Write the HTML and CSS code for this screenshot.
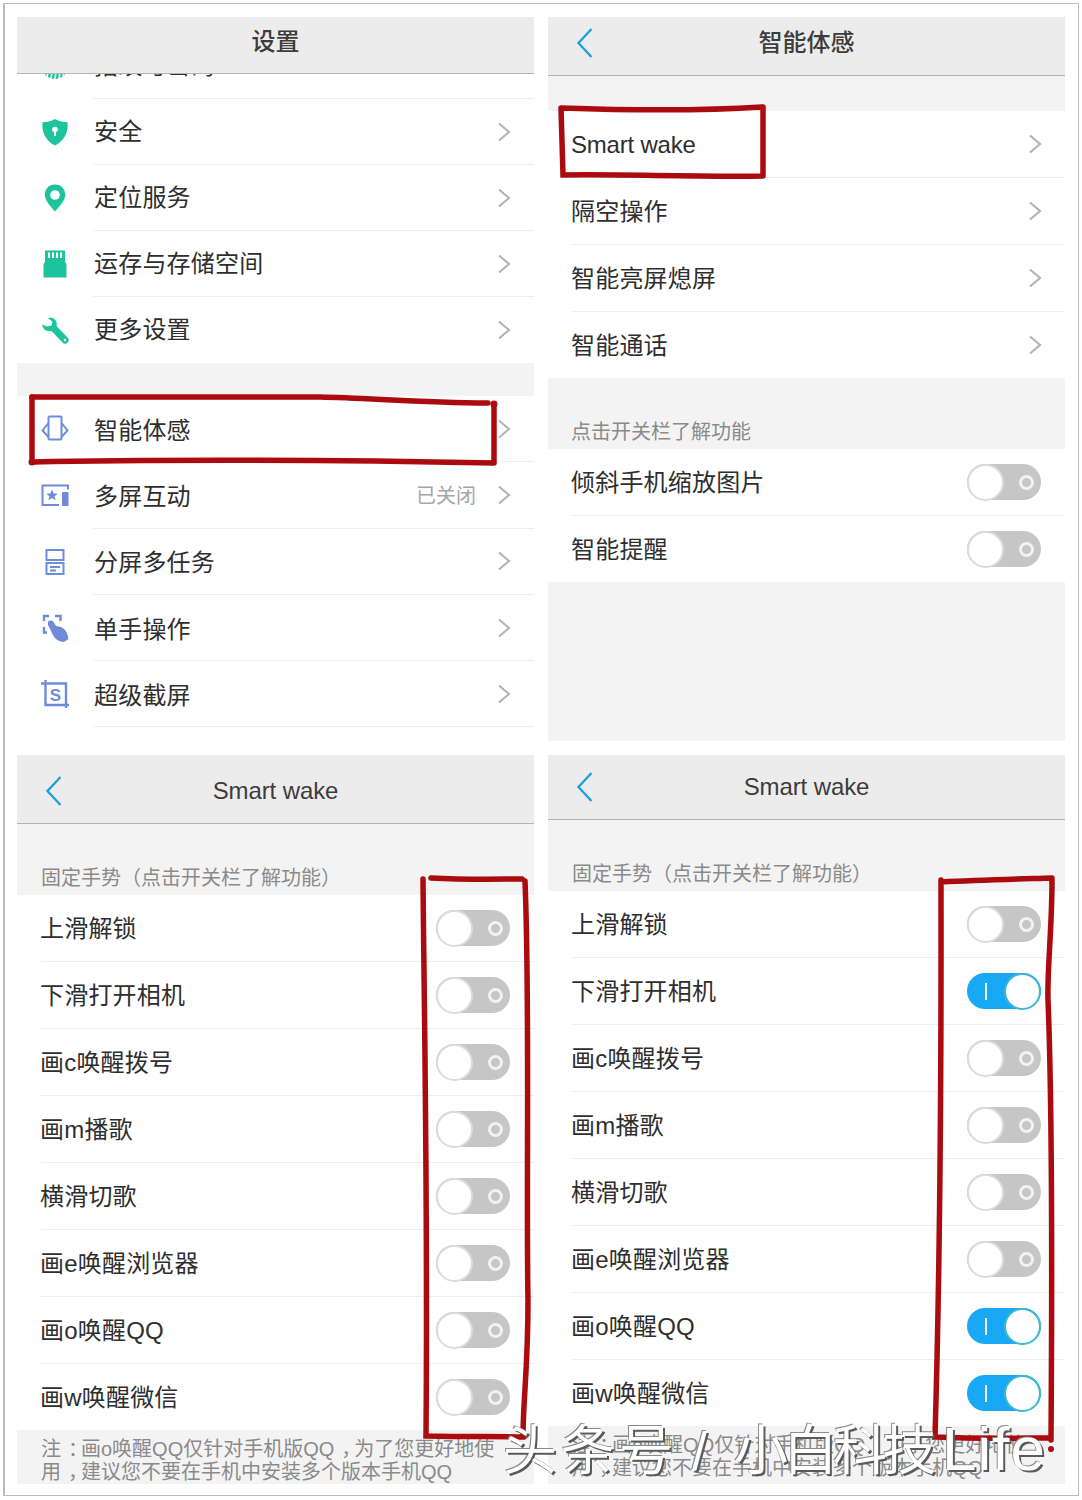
FILE: index.html
```html
<!DOCTYPE html>
<html lang="zh-CN">
<head>
    <meta charset="UTF-8">
    <meta name="viewport" content="width=device-width, initial-scale=1.0">
    <title>智能体感 Smart wake</title>
    <link rel="stylesheet" href="styles.css">
</head>
<body>
    <svg class="sprite" width="0" height="0">
        <symbol id="chev" viewBox="0 0 14 20"><path d="M2 1.5 L12 10 L2 18.5" fill="none" stroke="currentColor" stroke-width="2.2"/></symbol>
        <symbol id="back" viewBox="0 0 18 32"><path d="M15.5 2 L2.5 16 L15.5 30" fill="none" stroke="currentColor" stroke-width="2.4"/></symbol>
    </svg>

    <div class="sheet">
        <!-- 设置 -->
        <section class="panel">
            <header class="bar bar-a"><span></span><h2>设置</h2><span></span></header>
            <div class="row-cut">
                <div class="row">
                    <svg class="icon green" viewBox="0 0 28 28"><circle cx="14" cy="14" r="13" fill="currentColor"/><path d="M7 19 L6 26 M11 20 L10 27 M15 20 L14 27 M19 20 L18 27 M23 18 L22 25" stroke="#fff" stroke-width="1.6"/></svg>
                    <div class="row-body"><span class="name">指纹与密码</span></div>
                </div>
            </div>
            <div class="row">
                <svg class="icon green" viewBox="0 0 28 28"><path d="M14 1 C18 3.5 22 4.2 26.500 4.200 C27.500 13 24 22.500 14 27.500 C4 22.500 .5 13 1.500 4.200 C6 4.200 10 3.500 14 1Z" fill="currentColor"/><circle cx="14" cy="11.500" r="2.800" fill="#fff"/><rect x="13" y="12" width="2" height="6" fill="#fff"/></svg>
                <div class="row-body"><span class="name">安全</span><svg class="chev"><use href="#chev"/></svg></div>
            </div>
            <div class="row">
                <svg class="icon green" viewBox="0 0 28 28"><path d="M14 .5 C7.500 .5 3.800 5.500 3.800 10.500 C3.800 17 10 23 14 27.500 C18 23 24.200 17 24.200 10.500 C24.200 5.500 20.500 .5 14 .5Z" fill="currentColor"/><circle cx="14" cy="11" r="4.800" fill="#fff"/></svg>
                <div class="row-body"><span class="name">定位服务</span><svg class="chev"><use href="#chev"/></svg></div>
            </div>
            <div class="row">
                <svg class="icon green" viewBox="0 0 28 28"><path d="M4 .5 H24 V12 L25.500 14 V27.500 H2.500 V14 L4 12Z" fill="currentColor"/><path d="M8 2.500 V8 M12 2.500 V8 M16 2.500 V8 M20 2.500 V8" stroke="#fff" stroke-width="2"/></svg>
                <div class="row-body"><span class="name">运存与存储空间</span><svg class="chev"><use href="#chev"/></svg></div>
            </div>
            <div class="row">
                <svg class="icon green" viewBox="0 0 28 28"><path d="M11.500 2 C15 3.500 16.500 6.500 15.500 10 L26.500 21.500 A3.500 3.500 0 0 1 21.500 26.500 L10.500 15 C6 16 2 13.500 1 8.500 L6 10.500 L10.500 9.500 L11.500 6 L7 2 C8.500 1.500 10 1.500 11.500 2Z" fill="currentColor"/><circle cx="24" cy="24" r="1.200" fill="#fff"/></svg>
                <div class="row-body last"><span class="name">更多设置</span><svg class="chev"><use href="#chev"/></svg></div>
            </div>

            <div class="gap gap-33"></div>

            <div class="row mid">
                <svg class="icon blue" viewBox="0 0 28 28" fill="none" stroke="currentColor" stroke-width="2"><rect x="7.500" y="1.500" width="13" height="23" rx="1"/><path d="M7.500 8 L1.500 15.500 L7.500 22 M20.500 8 L26.500 15.500 L20.500 22"/></svg>
                <div class="row-body"><span class="name">智能体感</span><svg class="chev"><use href="#chev"/></svg></div>
            </div>
            <div class="row mid">
                <svg class="icon blue" viewBox="0 0 28 28"><path d="M27 8.500 V4.500 H1.500 V24 H18" fill="none" stroke="currentColor" stroke-width="2"/><path d="M11 8.500 L12.600 12.500 L16.800 12.700 L13.500 15.300 L14.700 19.300 L11 17 L7.300 19.300 L8.500 15.300 L5.200 12.700 L9.400 12.500Z" fill="currentColor"/><rect x="21" y="11" width="6.500" height="14" rx="1" fill="currentColor"/></svg>
                <div class="row-body"><span class="name">多屏互动</span><span class="value">已关闭</span><svg class="chev"><use href="#chev"/></svg></div>
            </div>
            <div class="row mid">
                <svg class="icon blue" viewBox="0 0 28 28" fill="none" stroke="currentColor" stroke-width="2"><rect x="5.500" y="2" width="17" height="10"/><rect x="5.500" y="15" width="17" height="11"/><path d="M9 19 H19 M9 22.500 H15"/></svg>
                <div class="row-body"><span class="name">分屏多任务</span><svg class="chev"><use href="#chev"/></svg></div>
            </div>
            <div class="row mid">
                <svg class="icon blue" viewBox="0 0 28 28"><path d="M3 7 V2 H8 M14 2 H19.500 V7 M3 13 V18.500 H6" fill="none" stroke="currentColor" stroke-width="2.400"/><path d="M7 8 C8 6 11 6 12.500 8 L15 12 L20 13 C25 15 27 21 27.500 25 L23 28 C18 28 14 25 12 21 L7 11Z" fill="currentColor"/></svg>
                <div class="row-body"><span class="name">单手操作</span><svg class="chev"><use href="#chev"/></svg></div>
            </div>
            <div class="row mid">
                <svg class="icon blue" viewBox="0 0 28 28"><path d="M0 3.500 H25 V25 H4.500 V0 M25 25 H28 M25 25 V28" fill="none" stroke="currentColor" stroke-width="2.400"/><text class="icon-s" x="14.500" y="20.500" text-anchor="middle">S</text></svg>
                <div class="row-body"><span class="name">超级截屏</span><svg class="chev"><use href="#chev"/></svg></div>
            </div>
        </section>

        <!-- 智能体感 -->
        <section class="panel">
            <header class="bar bar-b"><svg class="back"><use href="#back"/></svg><h2>智能体感</h2><span></span></header>
            <div class="gap gap-34"></div>
            <div class="row tall">
                <div class="row-body"><span class="name latin">Smart wake</span><svg class="chev"><use href="#chev"/></svg></div>
            </div>
            <div class="row tall">
                <div class="row-body"><span class="name">隔空操作</span><svg class="chev"><use href="#chev"/></svg></div>
            </div>
            <div class="row tall">
                <div class="row-body"><span class="name">智能亮屏熄屏</span><svg class="chev"><use href="#chev"/></svg></div>
            </div>
            <div class="row tall">
                <div class="row-body last"><span class="name">智能通话</span><svg class="chev"><use href="#chev"/></svg></div>
            </div>
            <div class="label label-short">点击开关栏了解功能</div>
            <div class="row tall">
                <div class="row-body"><span class="name">倾斜手机缩放图片</span><span class="switch"><i class="knob"></i><i class="ring"></i></span></div>
            </div>
            <div class="row tall">
                <div class="row-body last"><span class="name">智能提醒</span><span class="switch"><i class="knob"></i><i class="ring"></i></span></div>
            </div>
            <div class="fill"></div>
        </section>

        <!-- Smart wake，全部关闭 -->
        <section class="panel">
            <header class="bar bar-c"><svg class="back"><use href="#back"/></svg><h2 class="latin">Smart wake</h2><span></span></header>
            <div class="label">固定手势（点击开关栏了解功能）</div>
            <div class="row tall"><div class="row-body"><span class="name">上滑解锁</span><span class="switch"><i class="knob"></i><i class="ring"></i></span></div></div>
            <div class="row tall"><div class="row-body"><span class="name">下滑打开相机</span><span class="switch"><i class="knob"></i><i class="ring"></i></span></div></div>
            <div class="row tall"><div class="row-body"><span class="name">画c唤醒拨号</span><span class="switch"><i class="knob"></i><i class="ring"></i></span></div></div>
            <div class="row tall"><div class="row-body"><span class="name">画m播歌</span><span class="switch"><i class="knob"></i><i class="ring"></i></span></div></div>
            <div class="row tall"><div class="row-body"><span class="name">横滑切歌</span><span class="switch"><i class="knob"></i><i class="ring"></i></span></div></div>
            <div class="row tall"><div class="row-body"><span class="name">画e唤醒浏览器</span><span class="switch"><i class="knob"></i><i class="ring"></i></span></div></div>
            <div class="row tall"><div class="row-body"><span class="name">画o唤醒QQ</span><span class="switch"><i class="knob"></i><i class="ring"></i></span></div></div>
            <div class="row tall"><div class="row-body last"><span class="name">画w唤醒微信</span><span class="switch"><i class="knob"></i><i class="ring"></i></span></div></div>
            <div class="note">注<span class="punct">：</span>画o唤醒QQ仅针对手机版QQ<span class="punct">，</span>为了您更好地使<br>用<span class="punct">，</span>建议您不要在手机中安装多个版本手机QQ</div>
        </section>

        <!-- Smart wake，部分打开 -->
        <section class="panel">
            <header class="bar bar-d"><svg class="back"><use href="#back"/></svg><h2 class="latin">Smart wake</h2><span></span></header>
            <div class="label">固定手势（点击开关栏了解功能）</div>
            <div class="row tall"><div class="row-body"><span class="name">上滑解锁</span><span class="switch"><i class="knob"></i><i class="ring"></i></span></div></div>
            <div class="row tall"><div class="row-body"><span class="name">下滑打开相机</span><span class="switch on"><i class="knob"></i><i class="bar-mark"></i></span></div></div>
            <div class="row tall"><div class="row-body"><span class="name">画c唤醒拨号</span><span class="switch"><i class="knob"></i><i class="ring"></i></span></div></div>
            <div class="row tall"><div class="row-body"><span class="name">画m播歌</span><span class="switch"><i class="knob"></i><i class="ring"></i></span></div></div>
            <div class="row tall"><div class="row-body"><span class="name">横滑切歌</span><span class="switch"><i class="knob"></i><i class="ring"></i></span></div></div>
            <div class="row tall"><div class="row-body"><span class="name">画e唤醒浏览器</span><span class="switch"><i class="knob"></i><i class="ring"></i></span></div></div>
            <div class="row tall"><div class="row-body"><span class="name">画o唤醒QQ</span><span class="switch on"><i class="knob"></i><i class="bar-mark"></i></span></div></div>
            <div class="row tall"><div class="row-body last"><span class="name">画w唤醒微信</span><span class="switch on"><i class="knob"></i><i class="bar-mark"></i></span></div></div>
            <div class="note">注<span class="punct">：</span>画o唤醒QQ仅针对手机版QQ<span class="punct">，</span>为了您更好地使<br>用<span class="punct">，</span>建议您不要在手机中安装多个版本手机QQ</div>
        </section>
    </div>

    <!-- 手画的红框 -->
    <svg class="marks" viewBox="0 0 1082 1500" width="1082" height="1500">
        <path d="M32 397 H320 C370 398 420 403 488 403"/>
        <path d="M494 404 V463 M32 397 V460 M33 462 C120 460 300 459 494 463"/>
        <path d="M561 108 C620 110 700 111 762 107 M763 107 V175 M561 108 L563 175 C620 174 690 177 763 176"/>
        <path d="M423 879 C424 1000 428 1200 426 1436 C470 1437 500 1436 524 1437 M431 878 C470 880 500 879 522 879 M525 881 C530 1000 526 1200 528 1300 C528 1370 523 1400 523 1437"/>
        <path d="M941 880 C941 1000 942 1200 935 1437 C980 1439 1020 1438 1050 1438 M941 882 C980 880 1020 879 1052 878 M1052 880 C1052 930 1047 970 1048 1000 C1052 1100 1052 1300 1051 1440"/>
        <circle class="dot" cx="494" cy="404" r="3.500"/>
        <circle class="dot" cx="32" cy="462" r="3.500"/>
        <circle class="dot" cx="1051" cy="1449" r="3"/>
    </svg>

    <div class="watermark"><span class="wm-head">头条号</span> / <span class="wm-tail">小白科技</span><span class="wm-latin">Life</span></div>
</body>
</html>
```

FILE: styles.css
```css
* {
    box-sizing: border-box;
}

body {
    position: relative;
    width: 1082px;
    height: 1500px;
    margin: 0;
    background-color: #fff;
    color: #333;
    font-family: "Liberation Sans", "Noto Sans CJK SC", sans-serif;
    overflow: hidden;
}

.sprite {
    position: absolute;
}

.sheet {
    display: grid;
    grid-template-columns: 517px 517px;
    grid-template-rows: 724px 729px;
    gap: 14px;
    width: 1076px;
    height: 1493px;
    margin: 3px 3px 0;
    padding: 13px;
    border: 1px solid #bdbdbd;
    border-left: 2px solid #bdbdbd;
    padding-left: 12px;
}

.panel {
    display: flex;
    flex-direction: column;
    background-color: #fff;
    overflow: hidden;
}

/* Title bars */
.bar {
    display: grid;
    grid-template-columns: 1fr auto 1fr;
    align-items: center;
    flex: none;
    background-color: #ececec;
    border-bottom: 1px solid #b4b4b4;
}

.bar h2 {
    margin: 0;
    font-size: 24px;
    font-weight: 500;
    color: #3c3c3c;
}

.bar h2.latin {
    font-weight: 400;
    letter-spacing: -.1px;
}

.bar-a {
    height: 57px;
    padding-bottom: 12px;
}

.bar-b {
    height: 59px;
    padding-bottom: 12px;
}

.bar-b .back {
    margin-top: 5px;
}

.bar-c {
    height: 69px;
    padding-top: 3px;
}

.bar-d {
    height: 65px;
}

.back {
    width: 18px;
    height: 32px;
    margin-left: 28px;
    color: #1ea2da;
}

/* Rows */
.row {
    display: flex;
    align-items: center;
    padding-left: 24px;
    flex: none;
}

.row-cut {
    display: flex;
    align-items: flex-end;
    flex: none;
    height: 25px;
    overflow: hidden;
}

.row-cut .row {
    width: 100%;
}

.row-body {
    display: flex;
    align-items: center;
    flex: 1;
    height: 66px;
    padding-right: 23px;
    border-bottom: 1px solid #eee;
}

.row .icon + .row-body {
    margin-left: 24px;
}

.row .icon + .row-body .name {
    padding-left: 1px;
}

.row.mid .row-body {
    height: 66.300px;
}

.row.tall .row-body {
    height: 67px;
}

.row.tall .row-body.last {
    height: 66px;
}

.row.mid .name {
    padding-top: 4px;
}

.row.tall .name {
    padding-top: 2px;
}

.row-body.last {
    border-bottom: none;
}

.name {
    flex: 1;
    font-size: 24px;
    line-height: 1;
    letter-spacing: .2px;
    color: #2e2e2e;
}

.name.latin {
    letter-spacing: -.2px;
}

.row.tall .name {
    margin-left: -1px;
}

.value {
    margin-right: 21px;
    font-size: 20px;
    color: #a6a6a6;
}

.chev {
    flex: none;
    width: 14px;
    height: 20px;
    color: #b4b4b4;
}

.icon {
    flex: none;
    width: 28px;
    height: 28px;
}

.icon.green {
    color: #1dc49b;
}

.icon.blue {
    color: #6f8cd8;
}

.icon-s {
    font-size: 17px;
    font-weight: 700;
    fill: #6f8cd8;
}

/* Grey blocks */
.gap {
    flex: none;
    background-color: #f3f3f3;
}

.gap-33 {
    height: 33px;
}

.gap-34 {
    height: 35px;
}

.fill {
    flex: 1;
    background-color: #f3f3f3;
}

.label {
    display: flex;
    align-items: flex-end;
    flex: none;
    height: 71px;
    padding: 0 0 4px 24px;
    background-color: #f3f3f3;
    font-size: 20px;
    line-height: 26px;
    color: #8a8a8a;
}

.label-short {
    padding-left: 23px;
}

.note {
    flex: 1;
    padding: 8px 24px 0;
    background-color: #f3f3f3;
    font-size: 20px;
    line-height: 23px;
    color: #8a8a8a;
    white-space: nowrap;
}

/* full-width punctuation sits in the middle of its cell on the phone */
.punct {
    padding-left: 7px;
    margin-right: -7px;
}

/* Switches */
.switch {
    display: flex;
    align-items: center;
    justify-content: space-between;
    flex: none;
    width: 74px;
    height: 36px;
    margin-right: 1px;
    padding-right: 7px;
    border-radius: 18px;
    background-color: #c6c6c6;
}

.knob {
    width: 37px;
    height: 37px;
    border: 2px solid #dcdcdc;
    border-radius: 50%;
    background-color: #fff;
}

.ring {
    width: 15px;
    height: 15px;
    border: 3px solid #f2f2f2;
    border-radius: 50%;
}

.switch.on {
    flex-direction: row-reverse;
    padding: 0 0 0 18px;
    background-color: #18a8f4;
}

.switch.on .knob {
    border-color: #3fb6d6;
}

.bar-mark {
    width: 2px;
    height: 17px;
    background-color: #e8f6fe;
}

/* Overlays */
.marks {
    position: absolute;
    top: 0;
    left: 0;
    fill: none;
    stroke: #ab0a0f;
    stroke-width: 5.500;
    stroke-linecap: round;
}

.marks .dot {
    fill: #ab0a0f;
    stroke: none;
}

.watermark {
    position: absolute;
    top: 1412px;
    left: 503px;
    font-size: 54px;
    line-height: 74px;
    color: #fff;
    white-space: nowrap;
    text-shadow: 2px 2px 0 #5a5a5a, -1px -1px 0 #8a8a8a;
}

.wm-head {
    letter-spacing: 4px;
}

.wm-tail {
    margin-left: 12px;
    letter-spacing: -4.500px;
}

.wm-latin {
    margin-left: 10px;
    font-size: 62px;
    letter-spacing: 1px;
}
```
